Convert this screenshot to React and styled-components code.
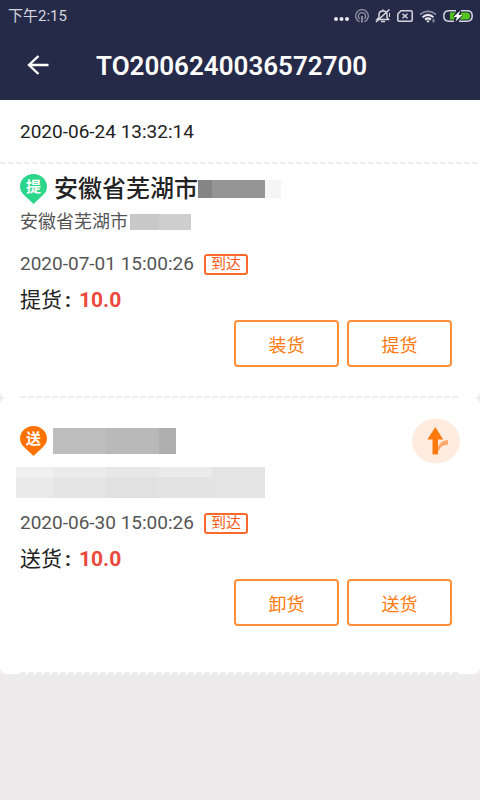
import React from 'react'
import styled, { createGlobalStyle } from 'styled-components'

const GlobalStyle = createGlobalStyle`
    * {
        box-sizing: border-box;
    }
    body {
        margin: 0;
        background-color: #edebeb;
        font-family: Roboto, "Noto Sans CJK SC", sans-serif;
        color: #222;
    }
`;
///////////////////////////////////////////////////////
const Header = styled.header`
    background-color: #262a49;
    color: white;
`;
///////////////////////////////////////////////////////
const StatusBar = styled.div`
    display: flex;
    align-items: center;
    justify-content: space-between;
    height: 32px;
    padding: 0 7px 0 8px;
    font-size: 15px;
    line-height: 20px;
    color: #d5d6dd;
`;
///////////////////////////////////////////////////////
const StatusIcons = styled.div`
    display: flex;
    align-items: center;
    gap: 6px;

    svg {
        display: block;
    }
`;
///////////////////////////////////////////////////////
const NavBar = styled.div`
    display: flex;
    align-items: center;
    height: 68px;
    gap: 44px;
    padding: 0 24px;
`;
///////////////////////////////////////////////////////
const BackButton = styled.button`
    display: flex;
    padding: 0;
    border: none;
    background: none;
    color: white;
    cursor: pointer;
`;
///////////////////////////////////////////////////////
const Title = styled.h1`
    margin: 0;
    font-size: 26px;
    line-height: 32px;
    font-weight: 600;
`;
///////////////////////////////////////////////////////
const Card = styled.section`
    background-color: white;
    border-radius: ${(props) => (props.$first ? '0 0 6px 6px' : '6px')};
`;
///////////////////////////////////////////////////////
const CreatedAt = styled.div`
    padding: 20px 20px 18px;
    font-size: 19px;
    line-height: 24px;
`;
///////////////////////////////////////////////////////
const DashedLine = styled.div`
    height: 2px;
    margin: ${(props) => (props.$inset ? '0 20px' : '0')};
    background: repeating-linear-gradient(
      to right,
      #ededed 0 6px,
      transparent 6px 8px
    );
`;
///////////////////////////////////////////////////////
const Stop = styled.div`
    padding: ${(props) => (props.$roomy ? '17px 20px 46px' : '5px 20px 29px')};
`;
///////////////////////////////////////////////////////
const PlaceRow = styled.div`
    display: flex;
    align-items: center;
    gap: ${(props) => (props.$tall ? 6 : 7)}px;
    height: ${(props) => (props.$tall ? 52 : 39)}px;
`;
///////////////////////////////////////////////////////
const PlaceName = styled.h2`
    display: flex;
    align-items: center;
    flex: 1;
    margin: 0;
    font-size: 24px;
    line-height: 40px;
    font-weight: 500;
`;
///////////////////////////////////////////////////////
const Address = styled.div`
    display: flex;
    align-items: center;
    gap: 2px;
    height: 27px;
    font-size: 18px;
    line-height: 27px;
    color: #555;
`;
///////////////////////////////////////////////////////
const HiddenAddress = styled.div`
    margin: 0 0 0 -4px;
    padding: 0 0 1px;
`;
///////////////////////////////////////////////////////
const Mask = styled.span`
    display: flex;
`;
///////////////////////////////////////////////////////
const Tile = styled.span`
    width: ${(props) => props.$w}px;
    height: ${(props) => props.$h}px;
    background-color: ${(props) => props.$color};
`;
///////////////////////////////////////////////////////
const NavigateButton = styled.button`
    display: flex;
    padding: 0;
    border: none;
    background: none;
    cursor: pointer;
`;
///////////////////////////////////////////////////////
const TimeRow = styled.div`
    display: flex;
    align-items: center;
    gap: 10px;
    padding-top: ${(props) => (props.$roomy ? 18 : 13)}px;
    font-size: 19px;
    line-height: 22px;
    color: #555;
`;
///////////////////////////////////////////////////////
const Tag = styled.span`
    padding: 0 5px;
    border: 2px solid #fb6a2c;
    border-radius: 3px;
    font-size: 15px;
    line-height: 17px;
    color: #fb5a14;
`;
///////////////////////////////////////////////////////
const Quantity = styled.div`
    display: flex;
    align-items: center;
    margin-top: 10px;
    font-size: 21px;
    line-height: 30px;
`;
///////////////////////////////////////////////////////
const Colon = styled.span`
    width: 17px;
    padding-left: 3px;
    font-weight: 700;
`;
///////////////////////////////////////////////////////
const Amount = styled.strong`
    font-weight: 700;
    color: #ea4a3c;
`;
///////////////////////////////////////////////////////
const Actions = styled.div`
    display: flex;
    justify-content: flex-end;
    gap: 8px;
    margin-top: 5px;
    padding-right: 8px;
`;
///////////////////////////////////////////////////////
const ActionButton = styled.button`
    width: 105px;
    height: 47px;
    padding: 0;
    border: 2px solid #ff8f38;
    border-radius: 4px;
    background-color: white;
    font-family: inherit;
    font-size: 18px;
    color: #ff7a0f;
    cursor: pointer;
`;
///////////////////////////////////////////////////////
const PinBox = styled.span`
    display: flex;
    width: 27px;

    svg {
        display: block;
    }
    text {
        font-family: "Noto Sans CJK SC", sans-serif;
        font-size: 15px;
        font-weight: 700;
        fill: white;
    }
`;
///////////////////////////////////////////////////////

const Pin = ({ color, label }) => (
    <PinBox>
        <svg width="27" height="30" viewBox="0 0 27 30">
            <path d="M13.500 0C6 0 0 5.600 0 12.500C0 16.500 1.800 19 4.500 21.500L13.500 30L22.500 21.500C25.200 19 27 16.500 27 12.500C27 5.600 21 0 13.500 0Z" fill={color} />
            <text x="13.500" y="18" textAnchor="middle">{label}</text>
        </svg>
    </PinBox>
)

const Redacted = ({ tiles, height }) => (
    <Mask>
        {tiles.map(([w, color], i) => (
            <Tile key={i} $w={w} $h={height} $color={color} />
        ))}
    </Mask>
)

const PhoneIcons = () => (
    <StatusIcons>
        <svg width="15" height="14" viewBox="0 0 15 14" fill="#e8e8ee">
            <circle cx="2" cy="10" r="2" />
            <circle cx="7.500" cy="10" r="2" />
            <circle cx="13" cy="10" r="2" />
        </svg>
        <svg width="14" height="14" viewBox="0 0 14 14" fill="none" stroke="#9294a5" strokeWidth="1.300">
            <path d="M4.500 12.700A6.300 6.300 0 1 1 9.500 12.700" />
            <path d="M4.700 9.900A3.600 3.600 0 1 1 9.300 9.900" />
            <path d="M7 7V13.500" strokeWidth="1.800" />
        </svg>
        <svg width="16" height="14" viewBox="0 0 16 14" fill="none" stroke="#d5d6dd" strokeWidth="1.500">
            <path d="M2 10.500H13.500L12 8.500V5.500C12 3.300 10.400 2 8 2S4 3.300 4 5.500V8.500Z" />
            <path d="M6 12.500H10M8 0.500V2M1 13L14.500 0.500" />
            <path d="M14.500 4V8" strokeWidth="1" />
        </svg>
        <svg width="16" height="12" viewBox="0 0 16 12" fill="none" stroke="#d5d6dd" strokeWidth="1.500">
            <path d="M4 0.800H14Q15.200 0.800 15.200 2V10Q15.200 11.200 14 11.200H2Q0.800 11.200 0.800 10V4Z" />
            <path d="M5.500 3.700L10.500 8.300M10.500 3.700L5.500 8.300" />
        </svg>
        <svg width="18" height="13" viewBox="0 0 18 13" fill="none" strokeWidth="2">
            <path d="M1 4.500Q9 -2 17 4.500" stroke="#85879a" />
            <path d="M3.500 7.200Q9 2.500 14.500 7.200" stroke="#e8e8ee" />
            <path d="M6 9.500Q9 7.200 12 9.500" stroke="#e8e8ee" />
            <path d="M7 10.500H11L9 12.800Z" fill="#e8e8ee" stroke="none" />
            <path d="M14.500 9V12.500" stroke="#85879a" />
        </svg>
        <svg width="30" height="12" viewBox="0 0 30 12">
            <path d="M13 0.800H6Q0.800 0.800 0.800 6T6 11.200H11M18 0.800H24Q29.200 0.800 29.200 6T24 11.200H16" fill="none" stroke="#d5d6dd" strokeWidth="1.500" />
            <path d="M7 2.500H13L9.500 6.800H12L11 9.500H7Z" fill="#55c51b" />
            <path d="M18.500 2.500H24Q27 2.500 27 6T24 9.500H16.500L20 5.200H17.500Z" fill="#55c51b" />
            <path d="M17.500 0.500L10.500 7H14L12.500 11.500L19.500 5H15.500Z" fill="white" />
        </svg>
    </StatusIcons>
)

const BackArrow = () => (
    <svg width="28" height="28" viewBox="0 0 28 28" fill="none" stroke="currentColor" strokeWidth="2.400">
        <path d="M24.500 13H5M14.500 4L5 13L14.500 22" />
    </svg>
)

const RouteIcon = () => (
    <svg width="48" height="46" viewBox="0 0 48 46">
        <ellipse cx="24" cy="23" rx="24" ry="22.500" fill="#ffecdf" />
        <path d="M25.500 30.500C26.500 27.500 29 22.500 36 22V26.500C31 27 28 29 26.500 34Z" fill="#ffa869" />
        <path d="M23.300 9L31.300 21.500H26V36.500H20.500V21.500H15.300Z" fill="#ff7a0a" />
    </svg>
)

const StopDetails = ({ time, label, actions, roomy }) => (
    <>
        <TimeRow $roomy={roomy}>
            <span>{time}</span>
            <Tag>到达</Tag>
        </TimeRow>
        <Quantity>
            {label}
            <Colon>:</Colon>
            <Amount>10.0</Amount>
        </Quantity>
        <Actions>
            {actions.map((action) => (
                <ActionButton key={action} type="button">{action}</ActionButton>
            ))}
        </Actions>
    </>
)

const App = () => {
  return (
    <>
        <GlobalStyle />
        <Header>
            <StatusBar>
                <span>下午2:15</span>
                <PhoneIcons />
            </StatusBar>
            <NavBar>
                <BackButton type="button" aria-label="返回"><BackArrow /></BackButton>
                <Title>TO2006240036572700</Title>
            </NavBar>
        </Header>
        <main>
            <Card $first>
                <CreatedAt>2020-06-24 13:32:14</CreatedAt>
                <DashedLine />
                <Stop>
                    <PlaceRow>
                        <Pin color="#2bd68b" label="提" />
                        <PlaceName>
                            安徽省芜湖市
                            <Redacted height={18} tiles={[[14, '#858585'], [53, '#959595'], [16, '#f5f5f5']]} />
                        </PlaceName>
                    </PlaceRow>
                    <Address>
                        安徽省芜湖市
                        <Redacted height={16} tiles={[[29, '#c8c8c8'], [32, '#cecece']]} />
                    </Address>
                    <StopDetails
                        roomy
                        time="2020-07-01 15:00:26"
                        label="提货"
                        actions={['装货', '提货']}
                    />
                </Stop>
                <DashedLine $inset />
            </Card>
            <Card>
                <Stop $roomy>
                    <PlaceRow $tall>
                        <Pin color="#ff7200" label="送" />
                        <PlaceName>
                            <Redacted height={26} tiles={[[53, '#bebebe'], [53, '#b9b9b9'], [17, '#afafaf']]} />
                        </PlaceName>
                        <NavigateButton type="button" aria-label="导航"><RouteIcon /></NavigateButton>
                    </PlaceRow>
                    <HiddenAddress>
                        <Redacted height={10} tiles={[[37, '#f0f0f0'], [53, '#ebebeb'], [53, '#e7e7e7'], [53, '#ebebeb'], [53, '#e4e4e4']]} />
                        <Redacted height={21} tiles={[[37, '#eaeaea'], [53, '#e5e5e5'], [53, '#e1e1e1'], [53, '#e3e3e3'], [53, '#e4e4e4']]} />
                    </HiddenAddress>
                    <StopDetails
                        time="2020-06-30 15:00:26"
                        label="送货"
                        actions={['卸货', '送货']}
                    />
                </Stop>
                <DashedLine $inset />
            </Card>
        </main>
    </>
  )
}

export default App
